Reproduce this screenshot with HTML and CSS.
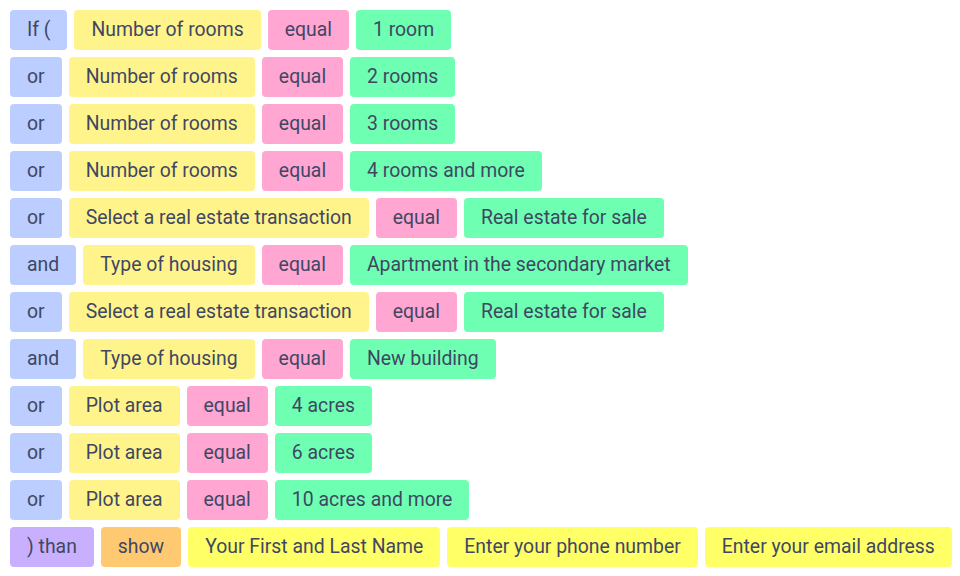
FILE: index.html
```html
<!DOCTYPE html>
<html lang="en">

<head>
    <meta charset="UTF-8" />
    <meta name="viewport" content="width=device-width, initial-scale=1.0" />
    <title>Condition builder</title>
    <link rel="stylesheet" href="styles.css">
</head>

<body>
    <div class="rules">
        <div class="row">
            <span class="chip op">If (</span>
            <span class="chip field">Number of rooms</span>
            <span class="chip cmp">equal</span>
            <span class="chip val">1 room</span>
        </div>
        <div class="row">
            <span class="chip op">or</span>
            <span class="chip field">Number of rooms</span>
            <span class="chip cmp">equal</span>
            <span class="chip val">2 rooms</span>
        </div>
        <div class="row">
            <span class="chip op">or</span>
            <span class="chip field">Number of rooms</span>
            <span class="chip cmp">equal</span>
            <span class="chip val">3 rooms</span>
        </div>
        <div class="row">
            <span class="chip op">or</span>
            <span class="chip field">Number of rooms</span>
            <span class="chip cmp">equal</span>
            <span class="chip val">4 rooms and more</span>
        </div>
        <div class="row">
            <span class="chip op">or</span>
            <span class="chip field">Select a real estate transaction</span>
            <span class="chip cmp">equal</span>
            <span class="chip val">Real estate for sale</span>
        </div>
        <div class="row">
            <span class="chip op">and</span>
            <span class="chip field">Type of housing</span>
            <span class="chip cmp">equal</span>
            <span class="chip val">Apartment in the secondary market</span>
        </div>
        <div class="row">
            <span class="chip op">or</span>
            <span class="chip field">Select a real estate transaction</span>
            <span class="chip cmp">equal</span>
            <span class="chip val">Real estate for sale</span>
        </div>
        <div class="row">
            <span class="chip op">and</span>
            <span class="chip field">Type of housing</span>
            <span class="chip cmp">equal</span>
            <span class="chip val">New building</span>
        </div>
        <div class="row">
            <span class="chip op">or</span>
            <span class="chip field">Plot area</span>
            <span class="chip cmp">equal</span>
            <span class="chip val">4 acres</span>
        </div>
        <div class="row">
            <span class="chip op">or</span>
            <span class="chip field">Plot area</span>
            <span class="chip cmp">equal</span>
            <span class="chip val">6 acres</span>
        </div>
        <div class="row">
            <span class="chip op">or</span>
            <span class="chip field">Plot area</span>
            <span class="chip cmp">equal</span>
            <span class="chip val">10 acres and more</span>
        </div>
        <div class="row">
            <span class="chip then">) than</span>
            <span class="chip action">show</span>
            <span class="chip input">Your First and Last Name</span>
            <span class="chip input">Enter your phone number</span>
            <span class="chip input">Enter your email address</span>
        </div>
    </div>
</body>

</html>
```

FILE: styles.css
```css
/* reset */
* {
    margin: 0;
    padding: 0;
    box-sizing: border-box;
}

body {
    font-family: Roboto, "Liberation Sans", Arial, sans-serif;
    background: #fff;
    color: #3f4763;
}

/* rule list */
.rules {
    display: flex;
    flex-direction: column;
    gap: 7px;
    padding: 10px;
}

.row {
    display: flex;
    gap: 7px;
}

.chip {
    display: block;
    height: 40px;
    line-height: 40px;
    padding: 0 17px;
    border-radius: 4px;
    font-size: 19.4px;
    white-space: nowrap;
}

/* chip colours */
.chip.op {
    background: #bccdff;
}

.chip.field {
    background: #fff48c;
}

.chip.cmp {
    background: #ffa6d3;
}

.chip.val {
    background: #6effb2;
}

.chip.then {
    background: #c8b0ff;
}

.chip.action {
    background: #ffc972;
}

.chip.input {
    background: #ffff66;
}
```
